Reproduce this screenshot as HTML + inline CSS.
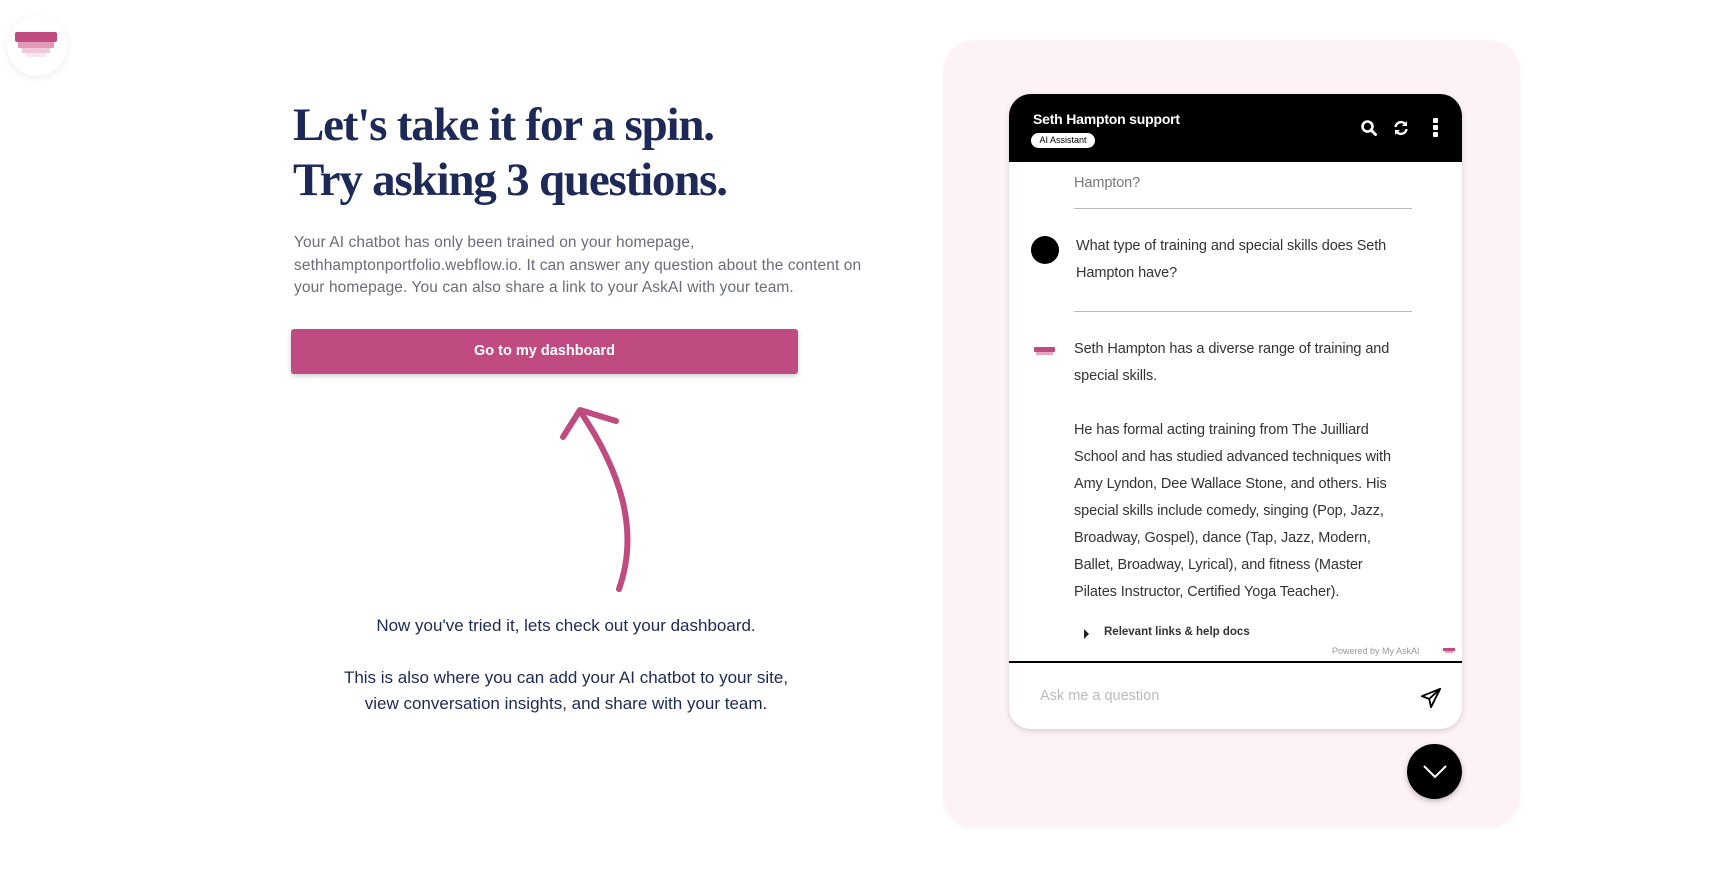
<!DOCTYPE html>
<html><head><meta charset="utf-8"><style>
*{margin:0;padding:0;box-sizing:border-box}
body{width:1717px;height:881px;background:#fff;position:relative;overflow:hidden;font-family:"Liberation Sans",sans-serif}
.abs{position:absolute}
.logo{left:7px;top:16px;width:60px;height:60px;border-radius:50%;background:#fff;box-shadow:0 2px 8px rgba(0,0,0,.08)}
h1{position:absolute;left:293px;top:98px;font-family:"Liberation Serif",serif;font-size:47px;line-height:55px;color:#1d2957;font-weight:bold;letter-spacing:-1.2px}
.p{left:294px;top:232px;width:620px;font-size:15.5px;line-height:22.5px;color:#6a6d7c;letter-spacing:0.1px;white-space:nowrap}
.btn{left:291px;top:329px;width:507px;height:45px;background:#bf4b80;border-radius:3px;box-shadow:0 2px 5px rgba(0,0,0,.2);color:#fff;font-weight:bold;font-size:14.5px;text-align:center;line-height:45px}
.c{left:300px;width:532px;text-align:center;color:#1d2957;font-size:17px}
.panel{left:943px;top:40px;width:577px;height:787px;background:#fdf2f6;border-radius:32px;box-shadow:0 2px 6px rgba(0,0,0,.04)}
.w{left:1009px;top:94px;width:453px;height:635px;background:#fff;border-radius:22px;overflow:hidden;box-shadow:0 2px 6px rgba(0,0,0,.15)}
.hd{position:absolute;left:0;top:0;width:453px;height:68px;background:#000}
.t{font-size:14.5px;color:#333;line-height:27px;letter-spacing:-0.1px;white-space:nowrap}
</style></head><body>
<div class="abs logo">
<div class="abs" style="left:8px;top:16px;width:42px;height:10px;background:#c04b80;border-radius:2px"></div>
<div class="abs" style="left:11px;top:26px;width:36px;height:6px;background:#e39ab9"></div>
<div class="abs" style="left:15px;top:32px;width:28px;height:5px;background:#f2c9da"></div>
<div class="abs" style="left:19px;top:37px;width:20px;height:4px;background:#fae6ee"></div>
</div>
<h1>Let's take it for a spin.<br>Try asking 3 questions.</h1>
<div class="abs p">Your AI chatbot has only been trained on your homepage,<br>sethhamptonportfolio.webflow.io. It can answer any question about the content on<br>your homepage. You can also share a link to your AskAI with your team.</div>
<div class="abs btn">Go to my dashboard</div>
<svg class="abs" style="left:540px;top:395px" width="120" height="210" viewBox="540 395 120 210"><path d="M619 589 C640 530 620 470 580 411" fill="none" stroke="#bf4b80" stroke-width="6" stroke-linecap="round"/><path d="M563 437 L580 410 L616 421" fill="none" stroke="#bf4b80" stroke-width="6" stroke-linecap="round" stroke-linejoin="round"/></svg>
<div class="abs c" style="top:616px">Now you've tried it, lets check out your dashboard.</div>
<div class="abs c" style="top:665px;line-height:26px">This is also where you can add your AI chatbot to your site,<br>view conversation insights, and share with your team.</div>
<div class="abs panel"></div>
<div class="abs w">
<div class="hd">
<div class="abs" style="left:24px;top:17px;color:#fff;font-weight:bold;font-size:14px;letter-spacing:-0.2px">Seth Hampton support</div>
<div class="abs" style="left:22px;top:39px;width:64px;height:15px;background:#fff;border-radius:8px;font-size:9px;line-height:15px;text-align:center;color:#000">AI Assistant</div>
<svg class="abs" style="left:351px;top:25px" width="18" height="18" viewBox="0 0 18 18"><circle cx="7.5" cy="7.5" r="5" fill="none" stroke="#fff" stroke-width="2.6"/><path d="M11 11l4.5 4.5" stroke="#fff" stroke-width="3" stroke-linecap="round"/></svg>
<svg class="abs" style="left:384px;top:25px" width="16" height="18" viewBox="0 0 16 18"><path d="M2.5 8a5.5 5.5 0 0 1 10-2.5M13.5 10a5.5 5.5 0 0 1-10 2.5" fill="none" stroke="#fff" stroke-width="2.4"/><path d="M14 2v5h-5zM2 16v-5h5z" fill="#fff"/></svg>
<div class="abs" style="left:424px;top:24px;width:5px;height:5px;background:#fff;border-radius:1px"></div>
<div class="abs" style="left:424px;top:31px;width:5px;height:5px;background:#fff;border-radius:1px"></div>
<div class="abs" style="left:424px;top:38px;width:5px;height:5px;background:#fff;border-radius:1px"></div>
</div>
<div class="abs t" style="left:65px;top:76px;color:#777">Hampton?</div>
<div class="abs" style="left:65px;top:114px;width:338px;height:1px;background:#bbb"></div>
<div class="abs" style="left:22px;top:142px;width:28px;height:28px;border-radius:50%;background:#000"></div>
<div class="abs t" style="left:67px;top:139px">What type of training and special skills does Seth<br>Hampton have?</div>
<div class="abs" style="left:65px;top:217px;width:338px;height:1px;background:#bbb"></div>
<div class="abs" style="left:25px;top:253px;width:21px;height:5px;background:#c04b80;border-radius:1px"></div>
<div class="abs" style="left:27px;top:258px;width:17px;height:3px;background:#e8a6c2"></div>
<div class="abs t" style="left:65px;top:242px">Seth Hampton has a diverse range of training and<br>special skills.<br><br>He has formal acting training from The Juilliard<br>School and has studied advanced techniques with<br>Amy Lyndon, Dee Wallace Stone, and others. His<br>special skills include comedy, singing (Pop, Jazz,<br>Broadway, Gospel), dance (Tap, Jazz, Modern,<br>Ballet, Broadway, Lyrical), and fitness (Master<br>Pilates Instructor, Certified Yoga Teacher).</div>
<div class="abs" style="left:75px;top:535px;width:0;height:0;border-left:5px solid #222;border-top:5px solid transparent;border-bottom:5px solid transparent"></div>
<div class="abs" style="left:95px;top:532px;font-size:11.5px;font-weight:bold;color:#333">Relevant links &amp; help docs</div>
<div class="abs" style="left:323px;top:552px;font-size:9px;color:#999">Powered by My AskAI</div>
<div class="abs" style="left:434px;top:554px;width:12px;height:3px;background:#c04b80"></div>
<div class="abs" style="left:436px;top:557px;width:8px;height:2px;background:#e8a6c2"></div>
<div class="abs" style="left:0;top:567px;width:453px;height:2px;background:#000"></div>
<div class="abs" style="left:31px;top:594px;font-size:14.5px;color:#bbb">Ask me a question</div>
<svg class="abs" style="left:411px;top:593px" width="22" height="22" viewBox="0 0 24 24"><path d="M22 2L2 10l8 3 2 9z M22 2L10 13" fill="none" stroke="#000" stroke-width="2" stroke-linejoin="round"/></svg>
</div>
<div class="abs" style="left:1407px;top:744px;width:55px;height:55px;border-radius:50%;background:#000;box-shadow:0 2px 6px rgba(0,0,0,.25)"></div>
<svg class="abs" style="left:1422px;top:762px" width="26" height="18" viewBox="0 0 26 18"><path d="M2 4l11 11L24 4" fill="none" stroke="#fff" stroke-width="2"/></svg>
</body></html>
